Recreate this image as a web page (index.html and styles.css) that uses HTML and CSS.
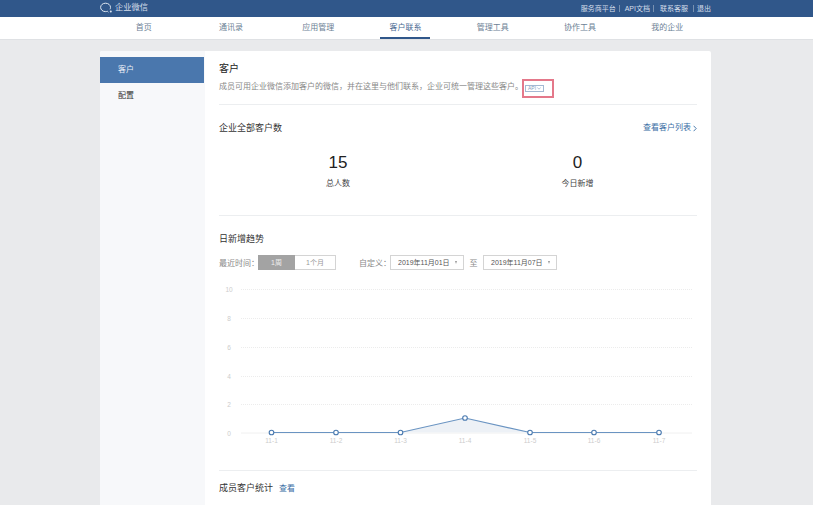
FILE: index.html
```html
<!DOCTYPE html>
<html lang="zh-CN">
<head>
<meta charset="utf-8">
<title>客户联系</title>
<link rel="stylesheet" href="styles.css">
</head>
<body>
<header class="topbar">
  <div class="wrap topbar-inner">
    <div class="brand">
      <svg class="brand-icon" width="13" height="13" viewBox="0 0 13 13" fill="none">
        <path d="M5.500 1.200C2.800 1.200.6 3 .6 5.400c0 2.300 2.100 4.200 4.800 4.200.8 0 1.400-.1 2-.3l1 .9" stroke="#dfe7f1" stroke-width="1"/>
        <path d="M5.500 1.200c2.800 0 5 1.800 5 4.200 0 .7-.2 1.300-.5 1.900" stroke="#dfe7f1" stroke-width="1"/>
        <circle cx="10.800" cy="9.400" r="1" fill="#dfe7f1"/>
      </svg>
      <span class="brand-name">企业微信</span>
    </div>
    <nav class="toplinks">
      <a>服务商平台</a><i></i><a>API文档</a><i></i><a>联系客服</a><i></i><a>退出</a>
    </nav>
  </div>
</header>
<nav class="mainnav">
  <div class="wrap mainnav-inner">
    <a class="navitem"><span>首页</span></a>
    <a class="navitem"><span>通讯录</span></a>
    <a class="navitem"><span>应用管理</span></a>
    <a class="navitem active"><span>客户联系</span></a>
    <a class="navitem"><span>管理工具</span></a>
    <a class="navitem"><span>协作工具</span></a>
    <a class="navitem"><span>我的企业</span></a>
  </div>
</nav>
<main class="wrap card">
  <aside class="side">
    <a class="sideitem current">客户</a>
    <a class="sideitem">配置</a>
  </aside>
  <section class="content">
    <div class="intro">
      <h1 class="title">客户</h1>
      <p class="desc">成员可用企业微信添加客户的微信，并在这里与他们联系，企业可统一管理这些客户。<span class="api">API<svg class="api-caret" width="4" height="3" viewBox="0 0 4 3"><path d="M.3.6 2 2.200 3.700.6" fill="none" stroke="#8fa9c9" stroke-width=".7"/></svg><span class="marker"></span></span></p>
    </div>
    <div class="block totals">
      <div class="head">
        <h2 class="subtitle">企业全部客户数</h2>
        <a class="more">查看客户列表<svg class="chev" width="4" height="7" viewBox="0 0 4 7"><path d="M.6.8 3.200 3.500.6 6.200" fill="none" stroke="#3a6ea5" stroke-width=".9"/></svg></a>
      </div>
      <div class="stats">
        <div class="stat"><div class="num">15</div><div class="lab">总人数</div></div>
        <div class="stat"><div class="num">0</div><div class="lab">今日新增</div></div>
      </div>
    </div>
    <div class="block trend">
      <h2 class="subtitle">日新增趋势</h2>
      <div class="filters">
        <span class="flabel">最近时间：</span>
        <div class="seg"><span class="on">1周</span><span>1个月</span></div>
        <span class="flabel custom">自定义：</span>
        <div class="date">2019年11月01日<b></b></div>
        <span class="flabel to">至</span>
        <div class="date">2019年11月07日<b></b></div>
      </div>
      <svg class="chart" width="477" height="170" viewBox="219 280 477 170">
        <g class="grid">
          <path d="M241 289.500H692M241 318.500H692M241 347.500H692M241 376.500H692M241 404.500H692"/>
        </g>
        <path d="M241 433H692" stroke="#f0f0f0" stroke-width="1"/>
        <g class="ylab">
          <text x="229" y="292">10</text><text x="229" y="321">8</text><text x="229" y="350">6</text>
          <text x="229" y="379">4</text><text x="229" y="407">2</text><text x="229" y="436">0</text>
        </g>
        <path d="M400.500 432.500 465 418 530 432.500Z" fill="#edf1f6"/>
        <path d="M271.500 432.500H400.500L465 418 530 432.500H659" fill="none" stroke="#6a94c2" stroke-width="1.200"/>
        <g class="dots">
          <circle cx="271.500" cy="432.500" r="2.300"/><circle cx="336" cy="432.500" r="2.300"/><circle cx="400.500" cy="432.500" r="2.300"/>
          <circle cx="465" cy="418" r="2.300"/><circle cx="530" cy="432.500" r="2.300"/><circle cx="594" cy="432.500" r="2.300"/><circle cx="659" cy="432.500" r="2.300"/>
        </g>
        <g class="xlab">
          <text x="271.500" y="443">11-1</text><text x="336" y="443">11-2</text><text x="400.500" y="443">11-3</text>
          <text x="465" y="443">11-4</text><text x="530" y="443">11-5</text><text x="594" y="443">11-6</text><text x="659" y="443">11-7</text>
        </g>
      </svg>
    </div>
    <div class="block members">
      <h2 class="subtitle">成员客户统计<a class="view">查看</a></h2>
    </div>
  </section>
</main>
</body>
</html>
```

FILE: styles.css
```css
* { box-sizing: border-box; }
html, body { height: 505px; overflow: hidden; }
body {
  margin: 0;
  background: #e9eaec;
  font-family: "Liberation Sans", "Noto Sans CJK SC", sans-serif;
  color: #333;
}
h1, h2, p { margin: 0; font-weight: normal; }
.wrap { width: 611px; margin-left: 100px; }

.topbar { height: 17px; background: #30578a; }
.topbar-inner { height: 17px; display: flex; justify-content: space-between; align-items: center; }
.brand { display: flex; align-items: center; color: #d5deea; font-size: 8.250px; }
.brand-icon { display: block; margin-right: 2px; }
.brand-name { display: block; line-height: 11px; margin-bottom: 2px; }
.toplinks { display: flex; align-items: center; color: #d5deea; font-size: 7px; line-height: 9px; margin-bottom: 1px; }
.toplinks i { width: 1px; height: 7px; margin: 0 6px 0 3px; background: #7891b1; }
.toplinks i:nth-of-type(1) { margin-right: 5px; }
.toplinks i:nth-of-type(3) { margin-left: 5px; margin-right: 3px; }

.mainnav { height: 23px; background: #fff; border-bottom: 1px solid #dfe1e4; }
.mainnav-inner { display: grid; grid-template-columns: repeat(7, 1fr); height: 22px; }
.navitem { display: flex; justify-content: center; font-size: 8px; color: #6d7f95; line-height: 22px; }
.navitem span { display: block; width: 50px; text-align: center; }
.navitem.active { color: #4a6a92; }
.navitem.active span { border-bottom: 2px solid #30578a; height: 22px; }

.card {
  display: flex;
  height: 520px;
  margin-top: 11px;
  background: #fff;
  border-radius: 2px;
  overflow: hidden;
}
.side { width: 105px; padding: 6px 1px 0 0; background: #f7f8fa; flex: none; }
.sideitem { display: block; height: 26px; padding-left: 18px; font-size: 8px; line-height: 26px; color: #333; }
.sideitem.current { background: #4a77ad; color: #e8eef6; }

.content { flex: 1; min-width: 0; padding: 0 14px; }
.intro { height: 54px; padding-top: 11px; border-bottom: 1px solid #eceef0; }
.title { font-size: 10px; line-height: 13px; color: #222; }
.desc { margin-top: 6px; font-size: 8px; line-height: 11px; color: #888; white-space: nowrap; }
.api {
  position: relative;
  display: inline-flex;
  align-items: center;
  height: 7px;
  width: 19px;
  margin-left: 2px;
  padding-left: 2px;
  border: 1px solid #a3b9d3;
  font-size: 5px;
  line-height: 5px;
  color: #7f9cc0;
  vertical-align: -0.5px;
}
.api-caret { margin-left: 1px; }
.marker {
  position: absolute;
  left: -4px;
  top: -7px;
  width: 32px;
  height: 19px;
  border: 2px solid #e4788a;
}

.block { border-bottom: 1px solid #eceef0; }
.subtitle { font-size: 9px; line-height: 12px; color: #333; }
.totals { height: 111px; padding-top: 17px; }
.head { display: flex; justify-content: space-between; align-items: center; }
.more { display: flex; align-items: center; font-size: 8px; line-height: 12px; color: #3a6ea5; }
.chev { margin-left: 2px; }
.stats { display: grid; grid-template-columns: 1fr 1fr; margin-top: 18px; }
.stat { text-align: center; }
.stat:first-child { margin-right: 1px; }
.num { font-size: 17px; line-height: 21px; color: #222; }
.lab { margin-top: 5px; font-size: 8px; line-height: 11px; color: #444; }

.trend { height: 255px; padding-top: 17px; }
.filters { display: flex; align-items: center; height: 15px; margin-top: 10px; font-size: 8px; color: #888; }
.flabel { white-space: nowrap; }
.flabel:first-child { width: 39px; }
.custom { margin-left: 23px; width: 31px; }
.to { width: 19px; text-align: center; }
.seg { display: flex; width: 78px; height: 15px; border: 1px solid #d4d4d4; }
.seg span { flex: 1; text-align: center; line-height: 13px; font-size: 7px; color: #999; }
.seg .on { flex: none; width: 37px; margin: -1px 0 -1px -1px; height: 15px; line-height: 15px; background: #a3a3a3; color: #eee; }
.date {
  position: relative;
  width: 74px;
  height: 15px;
  padding-left: 7px;
  border: 1px solid #d4d4d4;
  font-size: 7px;
  line-height: 13px;
  color: #555;
}
.date b {
  position: absolute;
  right: 6px;
  top: 5px;
  border-top: 3px solid #999;
  border-left: 1.500px solid transparent;
  border-right: 1.500px solid transparent;
}
.chart { display: block; margin-top: 10px; }
.grid path { stroke: #ececec; stroke-width: 1; stroke-dasharray: 1 1; fill: none; }
.ylab text { font-size: 6.500px; fill: #cccccc; text-anchor: middle; font-family: "Liberation Sans", sans-serif; }
.xlab text { font-size: 6.500px; fill: #cccccc; text-anchor: middle; font-family: "Liberation Sans", sans-serif; }
.dots circle { fill: #fff; stroke: #4a7ab0; stroke-width: 1.100; }

.members { border-bottom: 0; padding-top: 11px; }
.view { margin-left: 6px; font-size: 8px; color: #3a6ea5; }
```
